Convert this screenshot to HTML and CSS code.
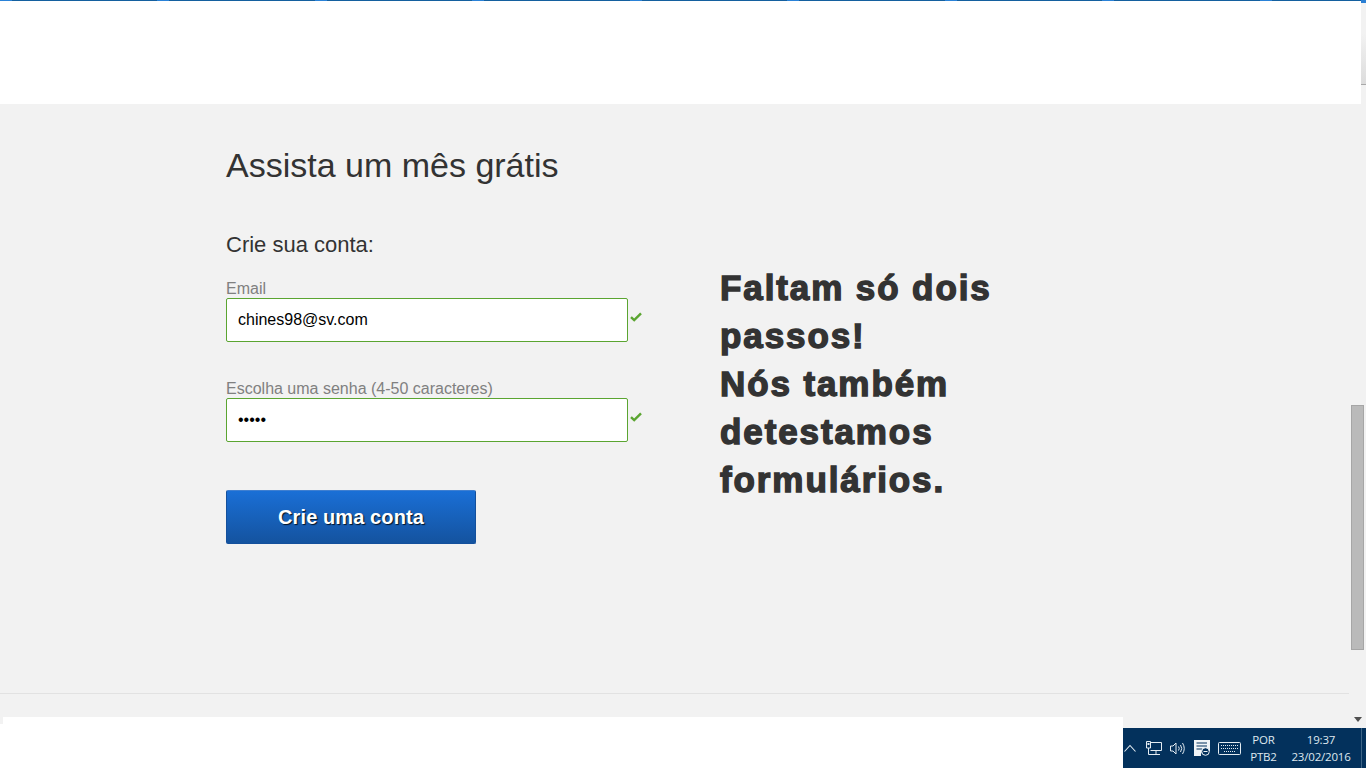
FILE: index.html
```html
<!DOCTYPE html>
<html lang="pt-BR">
  <head>
    <meta charset="UTF-8" />
    <title>Assista um mês grátis</title>
    <link rel="stylesheet" href="styles.css">
  </head>
  <body>
    <div class="topline"></div>
    <header class="head"></header>

    <main class="signup">
      <section class="form-col">
        <h1>Assista um mês grátis</h1>
        <h2>Crie sua conta:</h2>

        <label class="field">
          <span class="field-label">Email</span>
          <span class="field-row">
            <input type="text" value="chines98@sv.com" />
            <svg class="check" viewBox="0 0 12 10" width="12" height="10"><path d="M1 5.2 4.2 8.2 11 1.4" fill="none" stroke="#5ba531" stroke-width="2.4"/></svg>
          </span>
        </label>

        <label class="field">
          <span class="field-label">Escolha uma senha (4-50 caracteres)</span>
          <span class="field-row">
            <input type="password" value="abcde" />
            <svg class="check" viewBox="0 0 12 10" width="12" height="10"><path d="M1 5.2 4.2 8.2 11 1.4" fill="none" stroke="#5ba531" stroke-width="2.4"/></svg>
          </span>
        </label>

        <button type="button" class="submit">Crie uma conta</button>
      </section>

      <aside class="note">Faltam só dois passos!<br />Nós também detestamos formulários.</aside>
    </main>

    <div class="rule"></div>

    <!-- browser + desktop bits lying over the page -->
    <div class="edge-strip"><div class="edge-blue"></div><div class="edge-tab"></div></div>
    <div class="scrollbar">
      <div class="thumb"></div>
      <svg class="arrow" viewBox="0 0 8 5" width="8" height="5"><path d="M0 0H8L4 5Z" fill="#505050"/></svg>
    </div>
    <div class="white-patch"></div>

    <div class="taskbar">
      <svg class="tray-icon chevron" width="12" height="8" viewBox="0 0 12 8"><path d="M.5 7.500 6 1.500 11.500 7.500" fill="none" stroke="#e4ecf2" stroke-width="1.1"/></svg>
      <svg class="tray-icon" width="16" height="14" viewBox="0 0 16 14"><g fill="none" stroke="#e4ecf2"><path d="M4.500 1.500H15.500V9.500H4.500"/><path d="M10 9.500V13.500M6 13.500H14M2.500 7V13.500H6"/><path d="M.5 .5H4.500V7H.5Z" fill="#03315c"/></g><path d="M1.500 2H3.500V4H1.500Z" fill="#e4ecf2"/></svg>
      <svg class="tray-icon" width="16" height="13" viewBox="0 0 16 13"><g fill="none" stroke="#e4ecf2"><path d="M.5 4H3L6 1V12L3 9H.5Z"/><path d="M8.500 4.500Q10 6.500 8.500 8.500M10.500 3Q13 6.500 10.500 10M12.500 1Q16 6.500 12.500 12"/></g></svg>
      <svg class="tray-icon" width="16" height="16" viewBox="0 0 16 16"><path d="M0 0H16V11H10A4.500 4.500 0 0 0 7 16H0Z" fill="#f0f4f7"/><path d="M2.500 3H13M2.500 6H13M2.500 9H8" stroke="#03315c"/><circle cx="11.500" cy="11.500" r="3.800" fill="#03315c" stroke="#f0f4f7"/><path d="M9.500 11.500H13.500" stroke="#f0f4f7"/></svg>
      <svg class="tray-icon" width="23" height="13" viewBox="0 0 23 13"><rect x=".5" y=".5" width="22" height="12" rx="1" fill="none" stroke="#e4ecf2"/><path d="M3 3.500H20M3 6.500H20M6 9.500H17" stroke="#e4ecf2" stroke-dasharray="1 1"/></svg>
      <div class="lang"><span>POR</span><span>PTB2</span></div>
      <div class="clock"><span>19:37</span><span>23/02/2016</span></div>
      <div class="show-desktop"></div>
    </div>
  </body>
</html>
```

FILE: styles.css
```css
html, body {
  height: 768px;
  margin: 0;
  overflow: hidden;
}
body {
  position: relative;
  background: #f2f2f2;
  font-family: "Liberation Sans", Arial, sans-serif;
  color: #333;
}
.topline {
  height: 1px;
  background: repeating-linear-gradient(90deg, #2a82d8 0, #2a82d8 12px, #14609f 12px, #14609f 157.5px);
}
.head {
  height: 103px;
  margin-right: 5px;
  background: #fff;
}
.signup {
  display: flex;
  height: 589px;
  padding-left: 226px;
}
.form-col {
  width: 494px;
  flex: none;
}
h1 {
  margin: 0;
  padding-top: 41px;
  font-size: 34px;
  font-weight: 400;
  line-height: 40px;
}
h2 {
  margin: 46px 0 0;
  font-size: 22px;
  font-weight: 400;
  line-height: 28px;
}
.field {
  display: block;
  margin-top: 20px;
}
.field + .field {
  margin-top: 37px;
}
.field-label {
  display: block;
  height: 19px;
  font-size: 16px;
  line-height: 20px;
  color: #808080;
}
.field-row {
  display: flex;
  align-items: center;
  gap: 2px;
}
.field-row input {
  box-sizing: border-box;
  width: 402px;
  height: 44px;
  padding: 0 11px;
  border: 1px solid #5ba531;
  border-radius: 2px;
  background: #fff;
  color: #000;
  font-family: "Liberation Sans", Arial, sans-serif;
  font-size: 16px;
  outline: none;
}
.check {
  margin-top: -6px;
}
.submit {
  display: block;
  width: 250px;
  height: 54px;
  margin-top: 48px;
  padding: 0;
  border: 1px solid #14509c;
  border-top-color: #3f7fd0;
  border-radius: 2px;
  background: linear-gradient(#1a6fd6, #14539f);
  color: #fff;
  font-family: "Liberation Sans", Arial, sans-serif;
  font-size: 20px;
  font-weight: 700;
  letter-spacing: .1px;
  text-shadow: 1px 1px 1px rgba(0, 0, 0, .8);
}
.note {
  width: 310px;
  padding-top: 160px;
  font-size: 35px;
  font-weight: 700;
  line-height: 48px;
  letter-spacing: 1.9px;
  -webkit-text-stroke: 1.4px #333;
}
.rule {
  height: 1px;
  margin-right: 17px;
  background: #e2e2e2;
}
.edge-strip {
  position: absolute;
  top: 0;
  right: 0;
  width: 5px;
  height: 104px;
}
.edge-blue {
  height: 3px;
  background: #2a7fd4;
}
.edge-tab {
  height: 51px;
  margin-top: 31px;
  border-bottom: 1px solid #a8a8a8;
  box-sizing: border-box;
  background: linear-gradient(#f2f2f2, #dcdcdc);
}
.scrollbar {
  position: absolute;
  top: 405px;
  right: 0;
  width: 16px;
}
.thumb {
  box-sizing: border-box;
  width: 13px;
  height: 245px;
  margin-left: 1px;
  border: 1px solid #a6a6a6;
  background: #bababa;
}
.arrow {
  display: block;
  margin: 67px 0 0 4px;
}
.white-patch {
  position: absolute;
  left: 3px;
  top: 717px;
  width: 1120px;
  height: 51px;
  background: #fff;
  box-shadow: -3px 7px 0 #fff;
}
.taskbar {
  position: absolute;
  left: 1123px;
  top: 728px;
  width: 243px;
  height: 40px;
  display: flex;
  align-items: center;
  gap: 8px;
  box-sizing: border-box;
  padding-left: 1px;
  background: #03315c;
  color: #dfe8ef;
  font-family: "Open Sans", "Noto Sans", sans-serif;
  font-size: 11.5px;
  letter-spacing: -.2px;
  line-height: 17px;
}
.tray-icon {
  flex: none;
}
.chevron {
  margin-right: 2px;
}
.lang, .clock {
  display: flex;
  flex-direction: column;
  align-items: center;
  flex: none;
}
.lang {
  width: 27px;
  margin-left: 1px;
}
.clock {
  width: 58px;
  margin-left: 7px;
}
.show-desktop {
  flex: none;
  width: 1px;
  height: 40px;
  margin-left: 3px;
  background: #3d6587;
}
```
